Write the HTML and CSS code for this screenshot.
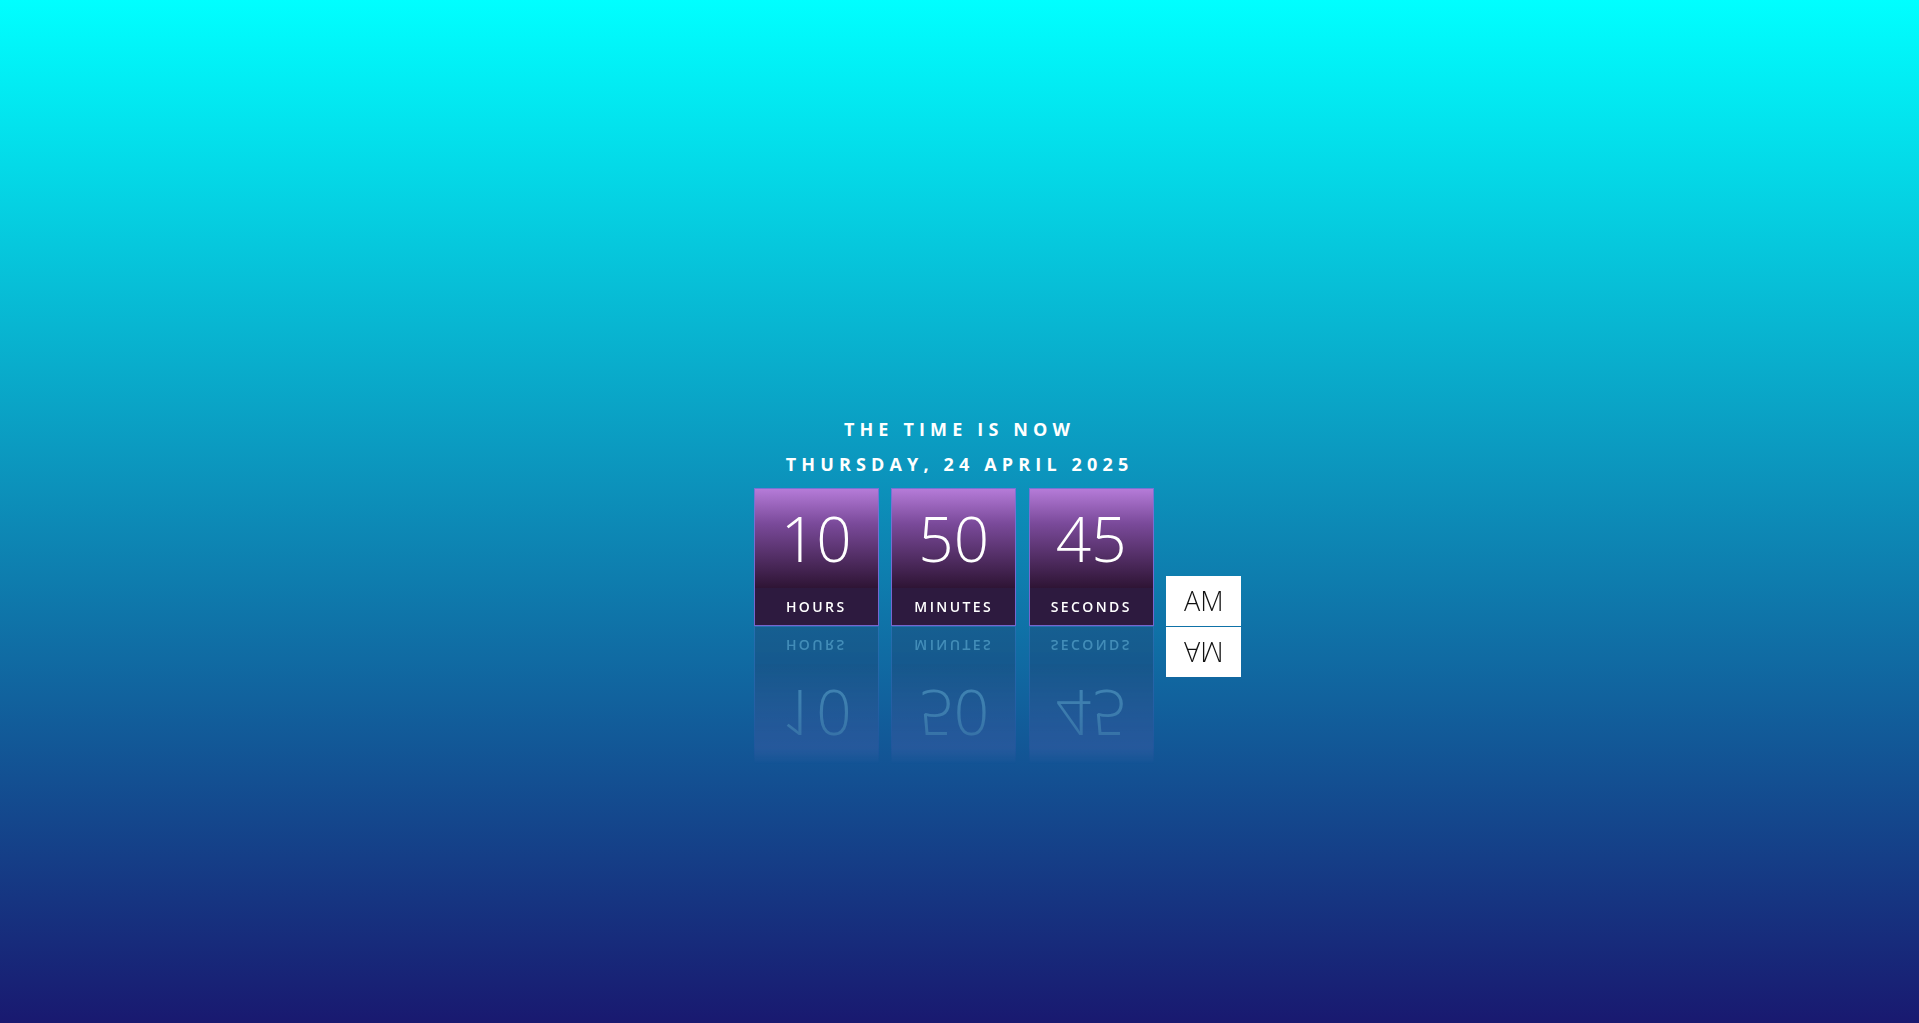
FILE: index.html
```html
<!DOCTYPE html>
<html lang="en">
<head>
<meta charset="utf-8">
<title>Clock</title>
<link rel="stylesheet" href="styles.css">
</head>
<body>
<main class="page">
  <h1 class="heading">The time is now</h1>
  <p class="date">Thursday, 24 April 2025</p>
  <div class="clock">
    <div class="unit">
      <div class="num">10</div>
      <div class="label">Hours</div>
    </div>
    <div class="unit">
      <div class="num">50</div>
      <div class="label">Minutes</div>
    </div>
    <div class="unit">
      <div class="num">45</div>
      <div class="label">Seconds</div>
    </div>
    <div class="ampm">AM</div>
  </div>
</main>
</body>
</html>
```

FILE: styles.css
```css
html, body {
  margin: 0;
  height: 100%;
}
body {
  background: linear-gradient(to bottom, #00ffff 0%, #191970 100%);
  font-family: "Open Sans", "Liberation Sans", sans-serif;
  color: #fff;
  overflow: hidden;
}
.page {
  display: flex;
  flex-direction: column;
  align-items: center;
  padding-top: 412px;
}
.heading, .date {
  margin: 0;
  font-size: 18px;
  font-weight: 700;
  line-height: 35px;
  letter-spacing: 5.15px;
  text-transform: uppercase;
}
.clock {
  display: flex;
  align-items: flex-end;
  gap: 12.5px;
  margin-top: 6px;
  margin-left: 76px;
}
.unit {
  width: 125px;
  box-sizing: border-box;
  border: 1px solid rgba(205, 90, 235, 0.55);
  -webkit-box-reflect: below 0 linear-gradient(transparent 0%, rgba(255,255,255,0.14) 12%, rgba(255,255,255,0.19) 40%, rgba(255,255,255,0.22) 100%);
}
.num {
  height: 99px;
  line-height: 99px;
  font-size: 62px;
  font-weight: 300;
  text-align: center;
  background: linear-gradient(to bottom, #b57bd8 0%, #7a4a9a 35%, #2e1434 100%);
}
.label {
  height: 37px;
  line-height: 37px;
  font-size: 14px;
  font-weight: 600;
  letter-spacing: 2.4px;
  text-align: center;
  text-transform: uppercase;
  background: #2d1a3f;
}
.ampm {
  width: 75px;
  height: 50px;
  line-height: 50px;
  background: #fff;
  color: #111;
  font-size: 27px;
  font-weight: 300;
  text-align: center;
  -webkit-box-reflect: below 1px;
}
```
